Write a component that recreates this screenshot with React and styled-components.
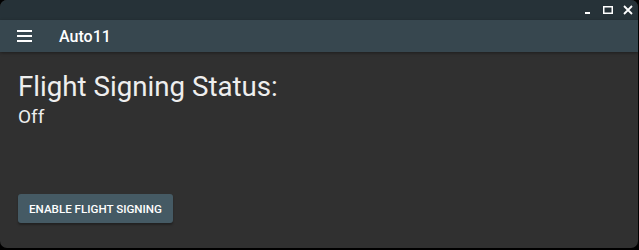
import React from "react";
import styled, { createGlobalStyle } from "styled-components";

const Global = createGlobalStyle`
  html, body { margin: 0; padding: 0; background: #000; }
  body { font-family: Roboto, "Liberation Sans", sans-serif; }
`;

const Window = styled.div`
  width: 638px;
  height: 248px;
  border-radius: 7px;
  overflow: hidden;
  background: #303030;
  display: flex;
  flex-direction: column;
`;

const TitleBar = styled.div`
  height: 20px;
  background: #263238;
  display: flex;
  justify-content: flex-end;
  align-items: center;
`;

const WinButton = styled.button`
  width: 20px;
  height: 20px;
  padding: 0;
  border: 0;
  background: transparent;
  display: flex;
  align-items: center;
  justify-content: center;
  color: #fff;
`;

const AppBar = styled.div`
  height: 32px;
  background: #37474f;
  display: flex;
  align-items: center;
  padding-left: 17px;
  box-shadow: 0 1px 3px rgba(0, 0, 0, 0.4);
`;

const Menu = styled.div`
  width: 15px;
  display: flex;
  flex-direction: column;
  gap: 3px;
  & > span {
    display: block;
    height: 2px;
    background: #fff;
  }
`;

const AppTitle = styled.div`
  margin-left: 27px;
  color: #fff;
  font-size: 16px;
  font-weight: 500;
`;

const Content = styled.div`
  padding: 19px 18px 0;
  display: flex;
  flex-direction: column;
  align-items: flex-start;
  color: #eeeeee;
`;

const Heading = styled.div`
  font-size: 27.7px;
  line-height: 32px;
`;

const Status = styled.div`
  margin-top: 3px;
  font-size: 19px;
  line-height: 22px;
`;

const Action = styled.button`
  margin-top: 66px;
  height: 29px;
  padding: 0 11px;
  border: 0;
  border-radius: 3px;
  background: #455a64;
  color: #fff;
  font-family: Roboto, "Liberation Sans", sans-serif;
  font-size: 11.6px;
  font-weight: 500;
  letter-spacing: 0;
  text-transform: uppercase;
  box-shadow: 0 2px 2px rgba(0, 0, 0, 0.3);
`;

export default function App() {
  return (
    <>
      <Global />
      <Window>
        <TitleBar>
          <WinButton aria-label="minimize">
            <svg width="10" height="10" viewBox="0 0 10 10">
              <rect x="2" y="7" width="5" height="2" fill="#fff" />
            </svg>
          </WinButton>
          <WinButton aria-label="maximize">
            <svg width="10" height="10" viewBox="0 0 10 10">
              <rect x="0.75" y="1.75" width="8.5" height="6.5" fill="none" stroke="#fff" strokeWidth="1.5" />
            </svg>
          </WinButton>
          <WinButton aria-label="close">
            <svg width="10" height="10" viewBox="0 0 10 10">
              <path d="M1 1 L9 9 M9 1 L1 9" stroke="#fff" strokeWidth="1.8" />
            </svg>
          </WinButton>
        </TitleBar>
        <AppBar>
          <Menu>
            <span />
            <span />
            <span />
          </Menu>
          <AppTitle>Auto11</AppTitle>
        </AppBar>
        <Content>
          <Heading>Flight Signing Status:</Heading>
          <Status>Off</Status>
          <Action>Enable Flight Signing</Action>
        </Content>
      </Window>
    </>
  );
}
